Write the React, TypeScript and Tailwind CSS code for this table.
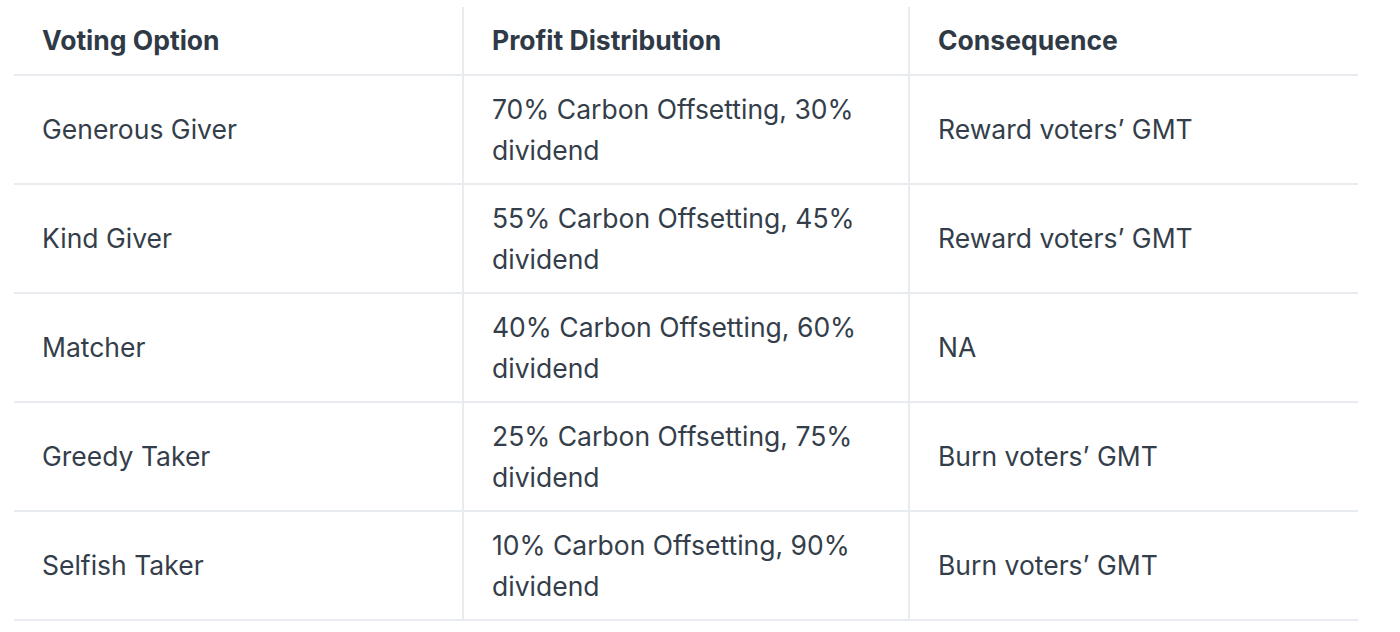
const rows = [
  { option: "Generous Giver", dist: "70% Carbon Offsetting, 30% dividend", result: "Reward voters’ GMT" },
  { option: "Kind Giver", dist: "55% Carbon Offsetting, 45% dividend", result: "Reward voters’ GMT" },
  { option: "Matcher", dist: "40% Carbon Offsetting, 60% dividend", result: "NA" },
  { option: "Greedy Taker", dist: "25% Carbon Offsetting, 75% dividend", result: "Burn voters’ GMT" },
  { option: "Selfish Taker", dist: "10% Carbon Offsetting, 90% dividend", result: "Burn voters’ GMT" },
];

export default function App() {
  return (
    <div className="w-[1400px] h-[632px] bg-white pt-[7px] pl-[14px] font-['Inter',sans-serif] text-[#343e4a]">
      <table className="w-[1344px] table-fixed border-collapse">
        <thead>
          <tr className="h-[68px] border-b-2 border-[#e8ebef]">
            <th className="w-[449px] pl-[28px] pr-6 text-left align-middle text-[26.5px] font-bold text-[#2f3a46]">Voting Option</th>
            <th className="w-[446px] pl-[28px] pr-6 text-left align-middle text-[26.5px] font-bold text-[#2f3a46] border-l-2 border-[#e8ebef]">Profit Distribution</th>
            <th className="pl-[28px] pr-6 text-left align-middle text-[26.5px] font-bold text-[#2f3a46] border-l-2 border-[#e8ebef]">Consequence</th>
          </tr>
        </thead>
        <tbody>
          {rows.map((r) => (
            <tr key={r.option} className="h-[109px] border-b-2 border-[#e8ebef]">
              <td className="pl-[28px] pr-6 align-middle text-[26.5px] leading-[41px]">{r.option}</td>
              <td className="pl-[28px] pr-[40px] align-middle text-[26.5px] leading-[41px] border-l-2 border-[#e8ebef]">{r.dist}</td>
              <td className="pl-[28px] pr-6 align-middle text-[26.5px] leading-[41px] border-l-2 border-[#e8ebef]">{r.result}</td>
            </tr>
          ))}
        </tbody>
      </table>
    </div>
  );
}
